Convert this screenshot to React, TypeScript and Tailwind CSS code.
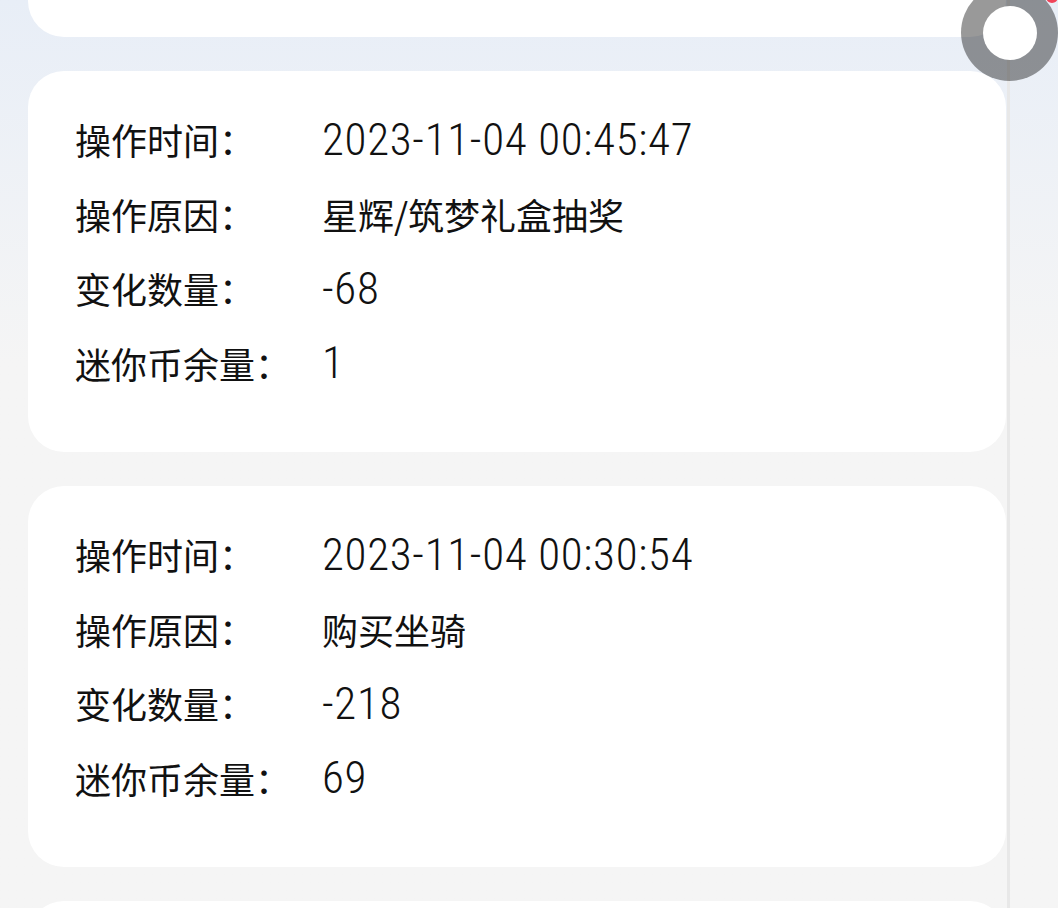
import React from "react";

type Record = {
  time: string;
  reason: string;
  delta: string;
  balance: string;
};

const records: Record[] = [
  { time: "2023-11-04 01:02:13", reason: "购买皮肤", delta: "-30", balance: "69" },
  { time: "2023-11-04 00:45:47", reason: "星辉/筑梦礼盒抽奖", delta: "-68", balance: "1" },
  { time: "2023-11-04 00:30:54", reason: "购买坐骑", delta: "-218", balance: "69" },
  { time: "2023-11-04 00:12:08", reason: "充值", delta: "+287", balance: "287" },
];

const cjk = { fontFamily: '"Noto Sans CJK SC", "Roboto", sans-serif' };
const num = { fontFamily: '"Roboto Condensed", "Roboto", "Noto Sans CJK SC", sans-serif' };

function Row({ label, value, numeric }: { label: string; value: string; numeric?: boolean }) {
  return (
    <div className="flex items-center h-[74.5px] text-[#111111]">
      <div className="w-[247px] shrink-0 text-[36px]" style={cjk}>
        {label}
      </div>
      {numeric ? (
        <div className="text-[45px] font-light leading-none tracking-[0.7px]" style={num}>
          {value}
        </div>
      ) : (
        <div className="text-[36px]" style={cjk}>
          {value}
        </div>
      )}
    </div>
  );
}

function RecordCard({ record }: { record: Record }) {
  return (
    <div className="bg-white rounded-[36px] pt-[31px] pb-[52px] pl-[47px]">
      <Row label="操作时间：" value={record.time} numeric />
      <Row label="操作原因：" value={record.reason} />
      <Row label="变化数量：" value={record.delta} numeric />
      <Row label="迷你币余量：" value={record.balance} numeric />
    </div>
  );
}

export default function App() {
  return (
    <div className="relative w-[1058px] h-[908px] overflow-hidden bg-gradient-to-b from-[#e8eef7] via-[#f5f5f5] via-40% to-[#f5f5f5]">
      <div className="flex h-full">
        <div className="w-[1007px] pl-[28px] pr-[1px]">
          <div className="flex flex-col gap-[34px] -mt-[344px]">
            {records.map((r, i) => (
              <RecordCard key={i} record={r} />
            ))}
          </div>
        </div>
        <div className="w-[3px] bg-[#e8e8e8]" />
      </div>

      {/* floating assistive button */}
      <div className="absolute left-[961px] top-[-16px] w-[97px] h-[97px] rounded-full bg-black/40 flex items-center justify-center">
        <div className="w-[54px] h-[54px] rounded-full bg-white" />
      </div>
      <div className="absolute left-[1046px] top-[-9px] w-[12px] h-[12px] rounded-full bg-[#f0455a]" />
    </div>
  );
}
